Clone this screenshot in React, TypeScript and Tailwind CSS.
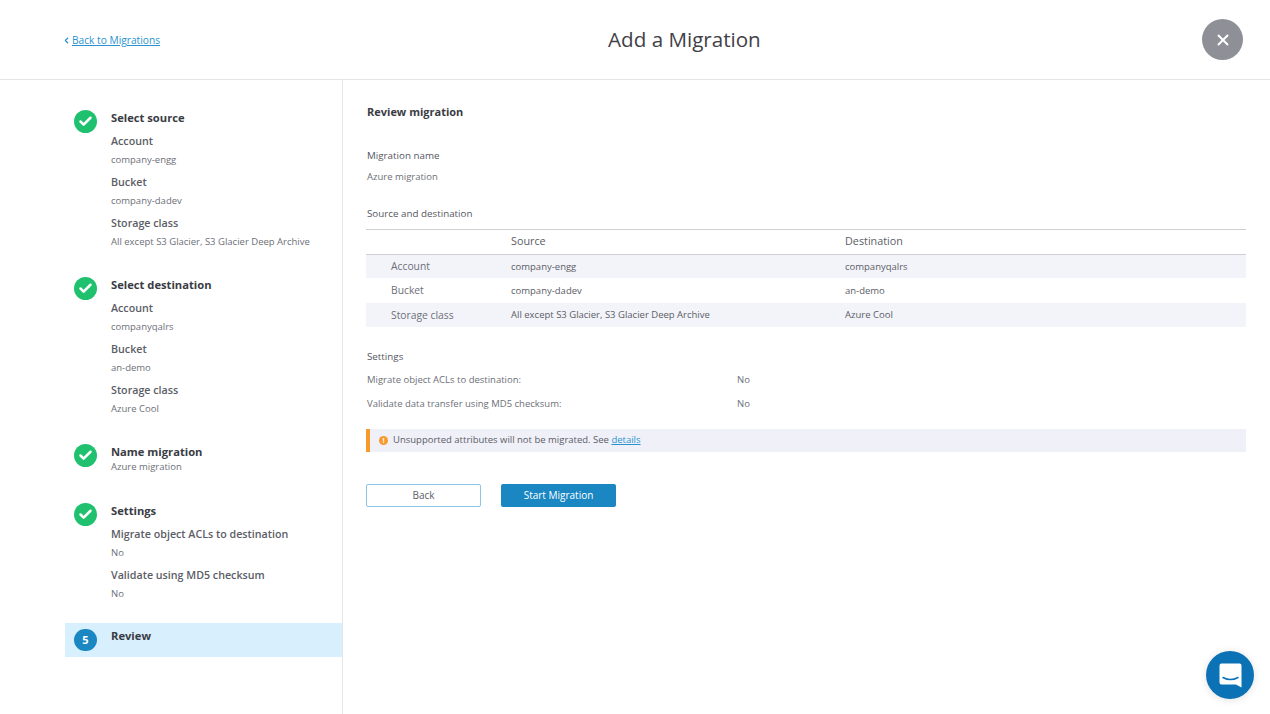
import { Check, ChevronLeft, X } from "lucide-react";

type Field = { label: string; value: string };

type Step = {
  title: string;
  fields?: Field[];
  note?: string;
  gap: string;
};

const steps: Step[] = [
  {
    title: "Select source",
    gap: "mb-[27px]",
    fields: [
      { label: "Account", value: "company-engg" },
      { label: "Bucket", value: "company-dadev" },
      { label: "Storage class", value: "All except S3 Glacier, S3 Glacier Deep Archive" },
    ],
  },
  {
    title: "Select destination",
    gap: "mb-[27px]",
    fields: [
      { label: "Account", value: "companyqalrs" },
      { label: "Bucket", value: "an-demo" },
      { label: "Storage class", value: "Azure Cool" },
    ],
  },
  { title: "Name migration", note: "Azure migration", gap: "mb-[29px]" },
  {
    title: "Settings",
    gap: "mb-[21px]",
    fields: [
      { label: "Migrate object ACLs to destination", value: "No" },
      { label: "Validate using MD5 checksum", value: "No" },
    ],
  },
];

const rows = [
  { name: "Account", source: "company-engg", destination: "companyqalrs", height: "h-[23px]", shaded: true },
  { name: "Bucket", source: "company-dadev", destination: "an-demo", height: "h-[25px]", shaded: false },
  {
    name: "Storage class",
    source: "All except S3 Glacier, S3 Glacier Deep Archive",
    destination: "Azure Cool",
    height: "h-6",
    shaded: true,
  },
];

function StepItem({ step }: { step: Step }) {
  return (
    <div className={`flex pl-[9px] ${step.gap}`}>
      <div className="flex h-[23px] w-[23px] shrink-0 items-center justify-center rounded-full bg-[#1fc16f]">
        <Check size={15} strokeWidth={4} className="text-white" />
      </div>
      <div className="ml-[14px]">
        <p className="pb-[1px] text-[11.2px] leading-[15px] font-bold text-[#3a3c44]">{step.title}</p>
        {step.note ? <p className="text-[9.5px] leading-[14px] text-[#6d6f78]">{step.note}</p> : null}
        {step.fields ? (
          <div className="mt-[6px] flex flex-col gap-[5px]">
            {step.fields.map((field) => (
              <div key={field.label}>
                <p className="text-[10.7px] leading-[18px] font-semibold text-[#5b5d66]">{field.label}</p>
                <p className="pt-[1px] text-[9.5px] leading-[17px] text-[#6d6f78]">{field.value}</p>
              </div>
            ))}
          </div>
        ) : null}
      </div>
    </div>
  );
}

export default function App() {
  return (
    <div className="relative flex h-[714px] flex-col overflow-hidden bg-white font-['Open_Sans',sans-serif]">
      <header className="flex h-20 shrink-0 items-center border-b border-[#e6e6ea] pr-[27px] pl-[62px]">
        <a href="#" className="flex items-center pt-[2px] text-[10.2px] text-[#2a93cf]">
          <ChevronLeft size={9} strokeWidth={3.5} />
          <span className="ml-[1px] underline">Back to Migrations</span>
        </a>
        <h1 className="ml-[448px] text-[20.6px] text-[#3f4148]">Add a Migration</h1>
        <button className="ml-auto flex h-[41px] w-[41px] items-center justify-center rounded-full bg-[#8f8f98]">
          <X size={18} strokeWidth={2.5} className="text-white" />
        </button>
      </header>

      <div className="flex min-h-0 flex-1">
        <aside className="w-[343px] shrink-0 border-r border-[#e6e6ea] pt-[30px] pl-[65px]">
          {steps.map((step) => (
            <StepItem key={step.title} step={step} />
          ))}
          <div className="flex h-[34px] bg-[#d8effd] pl-[9px]">
            <div className="mt-[6px] flex h-[22px] w-[23px] shrink-0 items-center justify-center rounded-full bg-[#1a87c2] text-[11px] font-bold text-white">
              5
            </div>
            <p className="mt-[5px] ml-[14px] text-[11.2px] leading-[15px] font-bold text-[#3a3c44]">Review</p>
          </div>
        </aside>

        <main className="flex-1 pt-[24px] pr-6 pl-[23px]">
          <h2 className="pl-[1px] text-[11px] leading-[15px] font-bold text-[#3a3c44]">Review migration</h2>

          <p className="mt-[29px] pl-[1px] text-[9.8px] leading-4 font-medium text-[#55575f]">Migration name</p>
          <p className="mt-[5px] pl-[1px] text-[9.5px] leading-[15px] text-[#6d6f78]">Azure migration</p>

          <p className="mt-[22px] pl-[1px] text-[9.8px] leading-4 font-medium text-[#55575f]">
            Source and destination
          </p>
          <div className="mt-[7px] grid h-[26px] grid-cols-[145px_334px_1fr] items-center border-y border-[#cfcfd4] pb-[2px] text-[10.8px] text-[#5b5d66]">
            <span />
            <span>Source</span>
            <span>Destination</span>
          </div>
          {rows.map((row) => (
            <div
              key={row.name}
              className={`grid grid-cols-[145px_334px_1fr] items-center pt-[1px] ${row.height} ${row.shaded ? "bg-[#f3f4fa]" : ""}`}
            >
              <span className="pl-[25px] text-[10.3px] text-[#6d6f78]">{row.name}</span>
              <span className="text-[9.5px] text-[#5b5d66]">{row.source}</span>
              <span className="text-[9.5px] text-[#5b5d66]">{row.destination}</span>
            </div>
          ))}

          <p className="mt-[22px] pl-[1px] text-[9.8px] leading-4 font-medium text-[#55575f]">Settings</p>
          <div className="mt-[3px] grid grid-cols-[370px_1fr] pl-[1px] text-[9.5px] leading-6 text-[#6d6f78]">
            <span>Migrate object ACLs to destination:</span>
            <span>No</span>
            <span>Validate data transfer using MD5 checksum:</span>
            <span>No</span>
          </div>

          <div className="mt-[13px] flex h-[23px] items-center border-l-4 border-[#f79a2e] bg-[#eff0f8] pl-[9px] text-[9.5px] text-[#5b5d66]">
            <span className="flex h-[9px] w-[9px] items-center justify-center rounded-full bg-[#f79a2e] text-[7px] leading-none font-bold text-white">
              !
            </span>
            <span className="ml-[5px]">
              Unsupported attributes will not be migrated. See{" "}
              <a href="#" className="text-[#2a93cf] underline">
                details
              </a>
            </span>
          </div>

          <div className="mt-[32px] flex gap-5">
            <button className="h-[23px] w-[115px] rounded-[2px] border border-[#8cc6e6] text-[10px] text-[#5b5d66]">
              Back
            </button>
            <button className="h-[23px] w-[115px] rounded-[2px] bg-[#1a87c2] text-[10px] font-medium text-white">
              Start Migration
            </button>
          </div>
        </main>
      </div>

      <button className="absolute top-[651px] left-[1206px] flex h-12 w-12 items-center justify-center rounded-full bg-[#0b72b5] shadow-[0_1px_8px_rgba(0,0,0,0.12)]">
        <svg width="23" height="25" viewBox="0 0 23 25" fill="none">
          <path
            d="M2.500 0.500h18a2 2 0 0 1 2 2V24.500l-5.500-3H2.500a2 2 0 0 1-2-2v-17a2 2 0 0 1 2-2Z"
            fill="white"
          />
          <path d="M4 14.500c4.500 2.500 10.500 2.500 15 0" stroke="#0b72b5" strokeWidth="1.500" strokeLinecap="round" />
        </svg>
      </button>
    </div>
  );
}
